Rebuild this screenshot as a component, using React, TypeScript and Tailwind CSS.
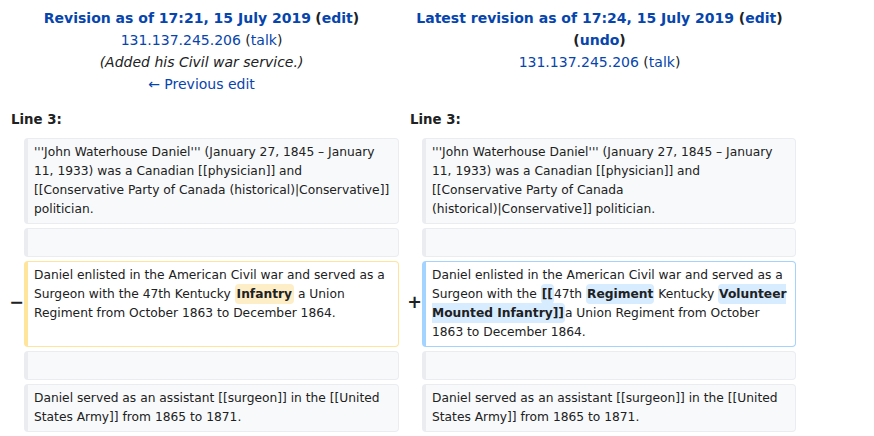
import type { ReactNode } from "react";

const link = "text-[#0645ad]";

function Ctx({ children }: { children?: ReactNode }) {
  return (
    <div className="bg-[#f8f9fa] border border-[#eaecf0] border-l-4 rounded-[4px] py-1 px-[6px] text-[12.25px] leading-[19px] text-[#202122]">
      {children ?? "\u00a0"}
    </div>
  );
}

function Marker({ children }: { children?: ReactNode }) {
  return (
    <div className="flex items-center justify-end">
      <span className="-mr-1 -mt-[3px] text-[17.5px] font-bold leading-none text-[#202122]">
        {children}
      </span>
    </div>
  );
}

function Del({ children }: { children: ReactNode }) {
  return (
    <span className="bg-[#feeec8] font-bold rounded-[4px] py-[3px] px-[2px]">{children}</span>
  );
}

function Ins({ children }: { children: ReactNode }) {
  return (
    <span className="bg-[#d8ecff] font-bold rounded-[4px] py-[3px] px-[1px]">{children}</span>
  );
}

export default function App() {
  return (
    <div className="bg-white min-h-screen font-['DejaVu_Sans',sans-serif] text-[#202122]">
      <div className="w-[800px] grid grid-cols-[16px_375px_15px_374px] gap-x-1 gap-y-1 p-1">
        {/* Revision headers */}
        <div className="col-span-2 text-center text-[14px] leading-[22px] pt-[3px]">
          <div>
            <a className={`${link} font-bold`}>Revision as of 17:21, 15 July 2019</a>{" "}
            <span className="font-bold">
              (<a className={link}>edit</a>)
            </span>
          </div>
          <div>
            <a className={link}>131.137.245.206</a> (<a className={link}>talk</a>)
          </div>
          <div className="italic">(Added his Civil war service.)</div>
          <div>
            <a className={link}>← Previous edit</a>
          </div>
        </div>
        <div className="col-span-2 text-center text-[14px] leading-[22px] pt-[3px]">
          <div>
            <span className="font-bold">
              <a className={link}>Latest revision as of 17:24, 15 July 2019</a> (
              <a className={link}>edit</a>)
            </span>
          </div>
          <div className="font-bold">
            (<a className={link}>undo</a>)
          </div>
          <div>
            <a className={link}>131.137.245.206</a> (<a className={link}>talk</a>)
          </div>
        </div>

        {/* Line numbers */}
        <div className="col-span-2 pl-[7px] pt-[11px] pb-[4px] text-[13.3px] leading-[20px] font-bold">
          Line 3:
        </div>
        <div className="col-span-2 pl-[7px] pt-[11px] pb-[4px] text-[13.3px] leading-[20px] font-bold">
          Line 3:
        </div>

        {/* Row 1 */}
        <Marker />
        <Ctx>
          '''John Waterhouse Daniel''' (January 27, 1845 – January 11, 1933) was a Canadian
          [[physician]] and [[Conservative Party of Canada (historical)|Conservative]] politician.
        </Ctx>
        <Marker />
        <Ctx>
          '''John Waterhouse Daniel''' (January 27, 1845 – January 11, 1933) was a Canadian
          [[physician]] and [[Conservative Party of Canada
          <br />
          (historical)|Conservative]] politician.
        </Ctx>

        {/* Row 2 */}
        <Marker />
        <Ctx />
        <Marker />
        <Ctx />

        {/* Row 3: changed line */}
        <Marker>−</Marker>
        <div className="bg-white border border-[#ffe49c] border-l-4 rounded-[4px] py-1 px-[6px] text-[12.25px] leading-[19px]">
          Daniel enlisted in the American Civil war and served as a Surgeon with the 47th
          Kentucky <Del>Infantry</Del> a Union Regiment from October 1863 to December 1864.
        </div>
        <Marker>+</Marker>
        <div className="bg-white border border-[#a3d3ff] border-l-4 rounded-[4px] py-1 px-[6px] text-[12.25px] leading-[19px]">
          Daniel enlisted in the American Civil war and served as a Surgeon with the{" "}
          <Ins>[[</Ins>47th <Ins>Regiment</Ins> Kentucky{" "}
          <Ins>Volunteer Mounted Infantry]]</Ins>a Union Regiment from October 1863 to December
          1864.
        </div>

        {/* Row 4 */}
        <Marker />
        <Ctx />
        <Marker />
        <Ctx />

        {/* Row 5 */}
        <Marker />
        <Ctx>
          Daniel served as an assistant [[surgeon]] in the [[United States Army]] from 1865 to
          1871.
        </Ctx>
        <Marker />
        <Ctx>
          Daniel served as an assistant [[surgeon]] in the [[United States Army]] from 1865 to
          1871.
        </Ctx>
      </div>
    </div>
  );
}
